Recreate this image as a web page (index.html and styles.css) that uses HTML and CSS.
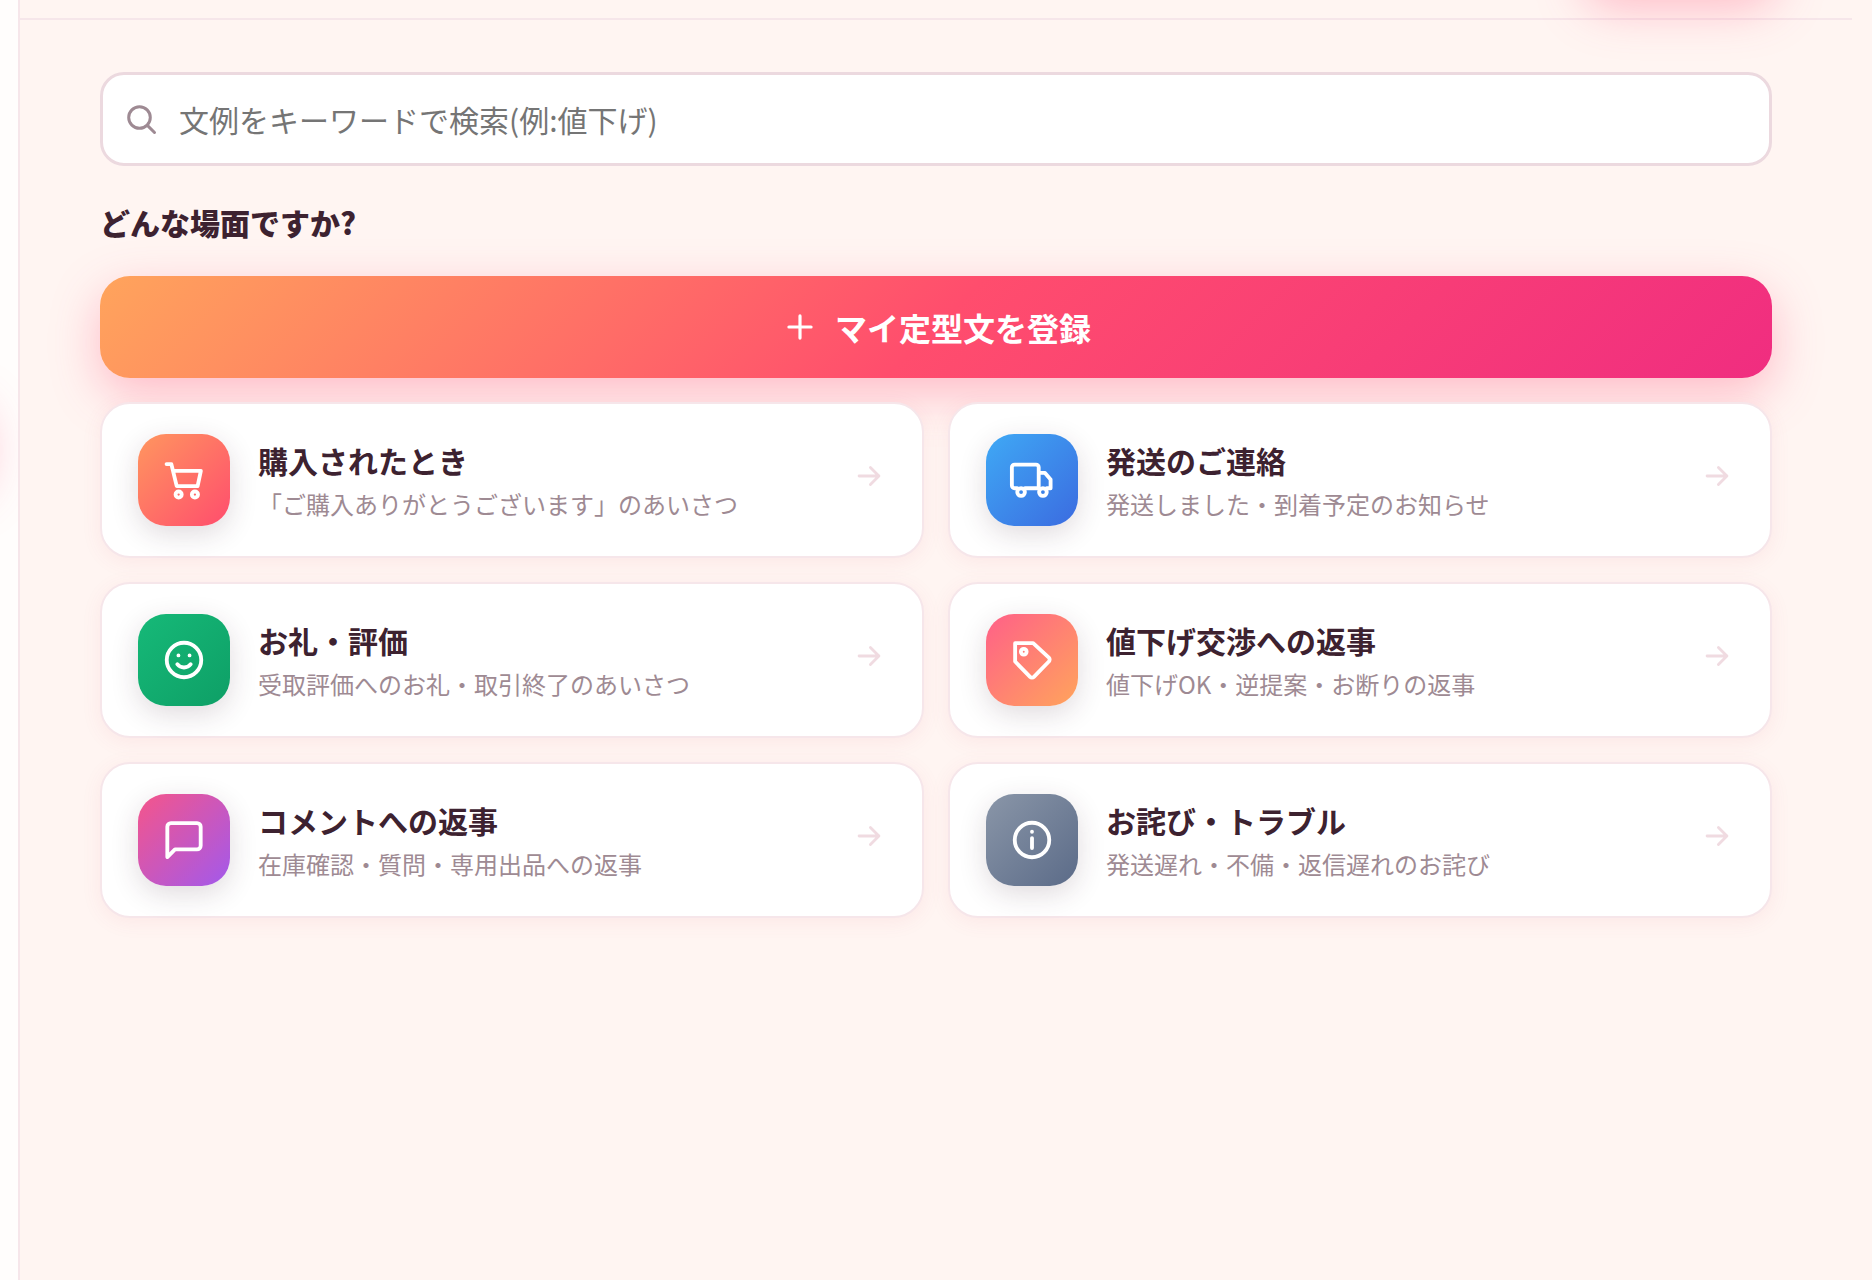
FILE: index.html
```html
<!DOCTYPE html>
<html lang="ja">
<head>
  <meta charset="utf-8">
  <meta name="viewport" content="width=device-width, initial-scale=1">
  <title>文例</title>
  <link rel="stylesheet" href="styles.css">
</head>
<body>
  <div class="app">
    <aside class="sidebar"><span class="sidebar-glow"></span></aside>
    <main class="main">
      <header class="topbar"><span class="topbar-glow"></span></header>
      <div class="content">
        <label class="search">
          <svg class="search-icon" viewBox="0 0 24 24" aria-hidden="true"><circle cx="11" cy="11" r="7.2"/><path d="M16.4 16.4 21 21"/></svg>
          <input class="search-input" type="text" aria-label="文例をキーワードで検索" placeholder="文例をキーワードで検索(例:値下げ)">
        </label>
        <h2 class="heading">どんな場面ですか?</h2>
        <button class="register" type="button">
          <svg class="register-icon" viewBox="0 0 24 24" aria-hidden="true"><path d="M12 5v14M5 12h14"/></svg>
          マイ定型文を登録
        </button>
        <div class="scenes">
          <button class="card" type="button">
            <span class="badge badge-purchase"><svg class="icon" viewBox="0 0 24 24" aria-hidden="true"><path d="M2.9 3.7h2.5L8.2 15.2h10.9l1.7-8H6.3"/><circle cx="9.2" cy="19.6" r="1.6"/><circle cx="17.7" cy="19.6" r="1.6"/></svg></span>
            <span class="card-text"><span class="card-title">購入されたとき</span><span class="card-note">「ご購入ありがとうございます」のあいさつ</span></span>
            <svg class="arrow" viewBox="0 0 24 24" aria-hidden="true"><path d="M5 12h14M13 6l6 6-6 6"/></svg>
          </button>
          <button class="card" type="button">
            <span class="badge badge-shipping"><svg class="icon" viewBox="0 0 24 24" aria-hidden="true"><path d="M4.3 16.3h-1.4a1.4 1.4 0 0 1-1.4-1.4V5.4A1.4 1.4 0 0 1 2.9 4h11.2a1.4 1.4 0 0 1 1.4 1.4v10.9H8.3M15.5 8.3h3.3l2.9 3.4v4.6h-2"/><circle cx="6.3" cy="18.3" r="2"/><circle cx="17.7" cy="18.3" r="2"/></svg></span>
            <span class="card-text"><span class="card-title">発送のご連絡</span><span class="card-note">発送しました・到着予定のお知らせ</span></span>
            <svg class="arrow" viewBox="0 0 24 24" aria-hidden="true"><path d="M5 12h14M13 6l6 6-6 6"/></svg>
          </button>
          <button class="card" type="button">
            <span class="badge badge-thanks"><svg class="icon" viewBox="0 0 24 24" aria-hidden="true"><circle cx="12" cy="12" r="9"/><path d="M8.5 14.2c1.7 2.3 5.3 2.3 7 0M9.1 9.6v.01M14.9 9.6v.01"/></svg></span>
            <span class="card-text"><span class="card-title">お礼・評価</span><span class="card-note">受取評価へのお礼・取引終了のあいさつ</span></span>
            <svg class="arrow" viewBox="0 0 24 24" aria-hidden="true"><path d="M5 12h14M13 6l6 6-6 6"/></svg>
          </button>
          <button class="card" type="button">
            <span class="badge badge-discount"><svg class="icon" viewBox="0 0 24 24" aria-hidden="true"><path d="M3.2 3.2h9.4l8.2 7.6a1.4 1.4 0 0 1 0 2l-7.8 8a1.4 1.4 0 0 1-2 0l-7.8-8z"/><circle cx="7.7" cy="7.7" r="1.5"/></svg></span>
            <span class="card-text"><span class="card-title">値下げ交渉への返事</span><span class="card-note">値下げOK・逆提案・お断りの返事</span></span>
            <svg class="arrow" viewBox="0 0 24 24" aria-hidden="true"><path d="M5 12h14M13 6l6 6-6 6"/></svg>
          </button>
          <button class="card" type="button">
            <span class="badge badge-comment"><svg class="icon" viewBox="0 0 24 24" aria-hidden="true"><path d="M20.7 15a1.9 1.9 0 0 1-1.9 1.9H7.3l-4 4V5.1a1.9 1.9 0 0 1 1.9-1.9h13.6a1.9 1.9 0 0 1 1.9 1.9z"/></svg></span>
            <span class="card-text"><span class="card-title">コメントへの返事</span><span class="card-note">在庫確認・質問・専用出品への返事</span></span>
            <svg class="arrow" viewBox="0 0 24 24" aria-hidden="true"><path d="M5 12h14M13 6l6 6-6 6"/></svg>
          </button>
          <button class="card" type="button">
            <span class="badge badge-trouble"><svg class="icon" viewBox="0 0 24 24" aria-hidden="true"><circle cx="12" cy="12" r="9"/><path d="M12 11v5.2M12 7.7v.01"/></svg></span>
            <span class="card-text"><span class="card-title">お詫び・トラブル</span><span class="card-note">発送遅れ・不備・返信遅れのお詫び</span></span>
            <svg class="arrow" viewBox="0 0 24 24" aria-hidden="true"><path d="M5 12h14M13 6l6 6-6 6"/></svg>
          </button>
        </div>
      </div>
    </main>
  </div>
</body>
</html>
```
FILE: styles.css
```css
:root {
  --ink: #3d2230;
  --muted: #9e8a93;
  --line: #f6e6ea;
  --line-strong: #ecd9df;
  --surface: #ffffff;
  --page: #fff5f2;
  --glow: 0 16px 48px rgba(255, 77, 118, 0.34);
}

* {
  box-sizing: border-box;
}

body {
  margin: 0;
  background: var(--page);
  color: var(--ink);
  font-family: "Noto Sans CJK JP", "Noto Sans", sans-serif;
}

button,
input {
  font: inherit;
  color: inherit;
}

svg {
  flex: none;
  fill: none;
  stroke: currentColor;
  stroke-width: 2;
  stroke-linecap: round;
  stroke-linejoin: round;
}

.app {
  display: flex;
  min-height: 100vh;
  padding-right: 20px;
}

.sidebar {
  position: relative;
  flex: none;
  width: 20px;
  overflow: hidden;
  background: #fffdfc;
  border-right: 2px solid var(--line);
}

/* Soft light spilling from the selected navigation item */
.sidebar-glow {
  position: absolute;
  top: 388px;
  right: 100%;
  width: 200px;
  height: 92px;
  margin-right: 14px;
  border-radius: 28px;
  box-shadow: var(--glow);
}

.main {
  flex: 1;
  min-width: 0;
}

.topbar {
  position: relative;
  height: 20px;
  border-bottom: 2px solid var(--line);
}

/* Soft light below the action at the end of the bar */
.topbar-glow {
  position: absolute;
  right: 76px;
  bottom: 100%;
  width: 192px;
  height: 80px;
  margin-bottom: 8px;
  border-radius: 28px;
  box-shadow: var(--glow);
}

.content {
  display: flex;
  flex-direction: column;
  padding: 52px 80px;
}

.search {
  position: relative;
  display: flex;
  align-items: center;
  gap: 20px;
  height: 94px;
  padding: 0 20px;
  background: var(--surface);
  border: 3px solid var(--line-strong);
  border-radius: 24px;
}

.search-icon {
  width: 36px;
  height: 36px;
  color: var(--muted);
}

.search-input {
  flex: 1;
  min-width: 0;
  padding: 0;
  background: none;
  border: 0;
  outline: 0;
  font-size: 30px;
  line-height: 44px;
}

.search-input::placeholder {
  color: #757575;
  opacity: 1;
}

.heading {
  margin: 34px 0 32px;
  font-size: 30px;
  font-weight: 800;
  line-height: 44px;
}

.register {
  display: flex;
  align-items: center;
  justify-content: center;
  gap: 16px;
  height: 102px;
  color: #ffffff;
  background: linear-gradient(135deg, #ffa45c 0%, #ff4d6d 50%, #f02d80 100%);
  border: 0;
  border-radius: 30px;
  box-shadow: var(--glow);
  font-size: 32px;
  font-weight: 700;
  line-height: 48px;
}

.register-icon {
  width: 38px;
  height: 38px;
}

.scenes {
  display: grid;
  grid-template-columns: repeat(2, minmax(0, 1fr));
  gap: 24px;
  margin-top: 24px;
}

.card {
  position: relative;
  display: flex;
  align-items: center;
  gap: 28px;
  padding: 30px 36px;
  background: var(--surface);
  border: 2px solid var(--line);
  border-radius: 30px;
  box-shadow: 0 4px 20px rgba(220, 80, 100, 0.08);
  text-align: left;
}

.badge {
  display: grid;
  flex: none;
  place-items: center;
  width: 92px;
  height: 92px;
  color: #ffffff;
  border-radius: 28px;
  box-shadow: 0 8px 28px rgba(61, 34, 48, 0.16);
}

.badge-purchase {
  background: linear-gradient(135deg, #ff965f, #ff4d6d);
}

.badge-shipping {
  background: linear-gradient(135deg, #3fa9f5, #3b6be0);
}

.badge-thanks {
  background: linear-gradient(135deg, #16b978, #0e9f66);
}

.badge-discount {
  background: linear-gradient(135deg, #ff6088, #ffa45c);
}

.badge-comment {
  background: linear-gradient(135deg, #f5558a, #a259ec);
}

.badge-trouble {
  background: linear-gradient(135deg, #8a96a8, #5b6b88);
}

.icon {
  width: 46px;
  height: 46px;
}

.card-text {
  display: flex;
  flex: 1;
  flex-direction: column;
  gap: 4px;
  min-width: 0;
}

.card-title {
  font-size: 30px;
  font-weight: 700;
  line-height: 44px;
}

.card-note {
  color: var(--muted);
  font-size: 24px;
  line-height: 36px;
}

.arrow {
  width: 34px;
  height: 34px;
  margin-bottom: 8px;
  color: #f0dbe1;
}
```
